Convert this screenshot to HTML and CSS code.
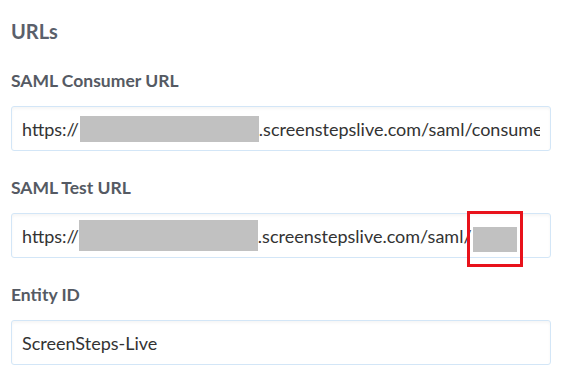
FILE: index.html
```html
<!DOCTYPE html>
<html lang="en">
<head>
    <meta charset="UTF-8">
    <title>URLs</title>
    <link rel="stylesheet" href="styles.css">
</head>
<body>
    <div class="panel">
        <h2 class="panel-title">URLs</h2>

        <div class="field">
            <label class="field-label">SAML Consumer URL</label>
            <div class="field-input">
                <span class="field-value">https://<span class="redacted redacted-host"></span>.screenstepslive.com/saml/consumer</span>
            </div>
        </div>

        <div class="field">
            <label class="field-label">SAML Test URL</label>
            <div class="field-input">
                <span class="field-value">https://<span class="redacted redacted-host tall"></span>.screenstepslive.com/saml/<span class="redacted redacted-id marked"></span></span>
            </div>
        </div>

        <div class="field">
            <label class="field-label">Entity ID</label>
            <div class="field-input">
                <span class="field-value">ScreenSteps-Live</span>
            </div>
        </div>
    </div>
</body>
</html>
```

FILE: styles.css
```css
body {
    margin: 0;
    background: #fff;
    font-family: Lato, "Open Sans", sans-serif;
}

.panel {
    padding: 19px 18px 0 11px;
}

.panel-title {
    margin: 0 0 27px;
    font-size: 20px;
    font-weight: 700;
    color: #5a606b;
}

.field {
    display: flex;
    flex-direction: column;
    margin-bottom: 26px;
}

.field-label {
    font-size: 17.5px;
    font-weight: 700;
    color: #555a63;
    margin-bottom: 15px;
}

.field-input {
    height: 45px;
    box-sizing: border-box;
    padding: 0 10px;
    display: flex;
    align-items: center;
    border: 1px solid #d3e6f7;
    border-radius: 3px;
    box-shadow: inset 0 2px 3px rgba(0, 0, 0, 0.04);
}

.field-value {
    flex: 1;
    min-width: 0;
    height: 100%;
    display: flex;
    align-items: center;
    white-space: nowrap;
    overflow: hidden;
    font-size: 18px;
    color: #333;
}

.redacted {
    display: inline-block;
    flex-shrink: 0;
    background: #c1c1c1;
}

.redacted-host {
    width: 179px;
    height: 26px;
    margin-left: 1px;
}

.redacted-host.tall {
    height: 31px;
    margin-left: 0;
}

.redacted-id {
    width: 44px;
    height: 25px;
    margin-top: 8px;
    margin-left: 1px;
}

.field-value:has(.marked) {
    overflow: visible;
}

.marked {
    position: relative;
}

.marked::after {
    content: "";
    position: absolute;
    left: -6px;
    right: -6px;
    top: -16px;
    bottom: -15px;
    border: 3px solid #e8121b;
}
```
